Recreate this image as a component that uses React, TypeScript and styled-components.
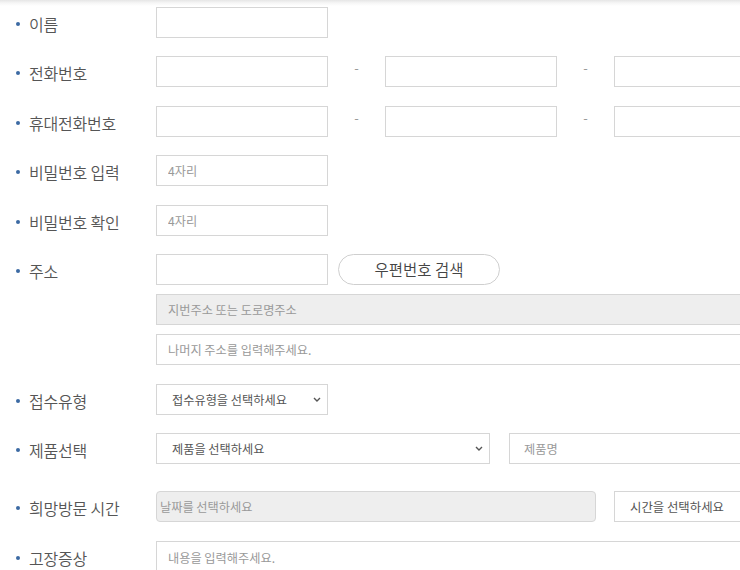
import React from "react";
import styled, { createGlobalStyle } from "styled-components";

const GlobalStyle = createGlobalStyle`
  html, body { margin: 0; padding: 0; background: #fff; overflow: hidden; }
  body { font-family: "Noto Sans CJK KR", "Noto Sans", sans-serif; }
  * { box-sizing: border-box; }
`;

const Page = styled.div`
  width: 740px;
  height: 570px;
  overflow: hidden;
  background: linear-gradient(#e6e6e6 0, #f6f6f6 3px, #fff 6px);
  padding: 7px 0 0 16px;
`;

const Form = styled.div`
  width: 820px;
  display: flex;
  flex-direction: column;
`;

const Row = styled.div<{ $gap?: number }>`
  display: flex;
  align-items: flex-start;
  margin-bottom: ${(p) => p.$gap ?? 18}px;
`;

const Label = styled.div`
  flex: none;
  width: 140px;
  height: 31px;
  display: flex;
  align-items: center;
  gap: 9px;
  padding-top: 2px;
  font-size: 16px;
  font-weight: 350;
  color: #555;
  letter-spacing: -0.2px;
  &::before {
    content: "";
    width: 4px;
    height: 4px;
    border-radius: 50%;
    background: #3b6aa3;
  }
`;

const Field = styled.div`
  width: 630px;
  display: flex;
  flex-direction: column;
  gap: 9px;
`;

const Line = styled.div`
  display: flex;
  align-items: flex-start;
`;

const TextInput = styled.input<{ $w?: number; $gray?: boolean; $round?: boolean; $pad?: number }>`
  flex: ${(p) => (p.$w ? "none" : "1 1 auto")};
  width: ${(p) => (p.$w ? `${p.$w}px` : "auto")};
  min-width: 0;
  height: 31px;
  border: 1px solid #d6d6d6;
  border-radius: ${(p) => (p.$round ? "4px" : "0")};
  background: ${(p) => (p.$gray ? "#eeeeee" : "#fff")};
  padding: 0 0 0 ${(p) => p.$pad ?? 11}px;
  font-family: "Noto Sans CJK KR", "Noto Sans", sans-serif;
  font-size: 12.2px;
  color: #555;
  outline: none;
  &::placeholder {
    color: #999;
  }
`;

const Dash = styled.span`
  flex: none;
  width: 57px;
  text-align: center;
  font-size: 13px;
  line-height: 24px;
  color: #999;
`;

const PillButton = styled.button`
  flex: none;
  margin-left: 10px;
  width: 162px;
  height: 31px;
  border: 1px solid #cfcfcf;
  border-radius: 16px;
  background: #fff;
  font-family: "Noto Sans CJK KR", "Noto Sans", sans-serif;
  font-size: 15.5px;
  font-weight: 350;
  color: #444;
  padding: 0 0 2px;
`;

const BoxButton = styled.button`
  flex: none;
  margin-left: 18px;
  width: 174px;
  height: 31px;
  border: 1px solid #d6d6d6;
  background: #fff;
  text-align: left;
  padding: 0 0 0 15px;
  font-family: "Noto Sans CJK KR", "Noto Sans", sans-serif;
  font-size: 12.4px;
  color: #555;
`;

const SelectWrap = styled.div<{ $w: number }>`
  position: relative;
  flex: none;
  width: ${(p) => p.$w}px;
  height: 31px;
`;

const Select = styled.select`
  appearance: none;
  -webkit-appearance: none;
  width: 100%;
  height: 31px;
  border: 1px solid #d6d6d6;
  border-radius: 0;
  background: #fff;
  padding: 0 0 0 15px;
  font-family: "Noto Sans CJK KR", "Noto Sans", sans-serif;
  font-size: 12.2px;
  color: #555;
  outline: none;
`;

const Chevron = styled.svg`
  position: absolute;
  right: 7px;
  top: 13px;
  pointer-events: none;
`;

const Gap = styled.div`
  flex: none;
  width: 19px;
`;

const Area = styled.textarea`
  width: 100%;
  height: 80px;
  border: 1px solid #d6d6d6;
  padding: 7px 11px;
  resize: none;
  font-family: "Noto Sans CJK KR", "Noto Sans", sans-serif;
  font-size: 12.2px;
  color: #555;
  outline: none;
  &::placeholder {
    color: #999;
  }
`;

const Arrow = () => (
  <Chevron width="8" height="5" viewBox="0 0 8 5">
    <path d="M1 1l3 3 3-3" fill="none" stroke="#555" strokeWidth="1.4" />
  </Chevron>
);

const DropDown: React.FC<{ w: number; text: string }> = ({ w, text }) => (
  <SelectWrap $w={w}>
    <Select defaultValue="">
      <option value="">{text}</option>
    </Select>
    <Arrow />
  </SelectWrap>
);

const PhoneInputs = () => (
  <Line>
    <TextInput $w={172} />
    <Dash>-</Dash>
    <TextInput $w={172} />
    <Dash>-</Dash>
    <TextInput $w={172} />
  </Line>
);

export default function App() {
  return (
    <>
      <GlobalStyle />
      <Page>
        <Form>
          <Row>
            <Label>이름</Label>
            <Field>
              <Line>
                <TextInput $w={172} />
              </Line>
            </Field>
          </Row>
          <Row $gap={19}>
            <Label>전화번호</Label>
            <Field>
              <PhoneInputs />
            </Field>
          </Row>
          <Row>
            <Label>휴대전화번호</Label>
            <Field>
              <PhoneInputs />
            </Field>
          </Row>
          <Row $gap={19}>
            <Label>비밀번호 입력</Label>
            <Field>
              <Line>
                <TextInput $w={172} placeholder="4자리" />
              </Line>
            </Field>
          </Row>
          <Row>
            <Label>비밀번호 확인</Label>
            <Field>
              <Line>
                <TextInput $w={172} placeholder="4자리" />
              </Line>
            </Field>
          </Row>
          <Row $gap={19}>
            <Label>주소</Label>
            <Field>
              <Line>
                <TextInput $w={172} />
                <PillButton>우편번호 검색</PillButton>
              </Line>
              <Line>
                <TextInput $gray placeholder="지번주소 또는 도로명주소" readOnly />
              </Line>
              <Line>
                <TextInput placeholder="나머지 주소를 입력해주세요." />
              </Line>
            </Field>
          </Row>
          <Row>
            <Label>접수유형</Label>
            <Field>
              <Line>
                <DropDown w={172} text="접수유형을 선택하세요" />
              </Line>
            </Field>
          </Row>
          <Row $gap={27}>
            <Label>제품선택</Label>
            <Field>
              <Line>
                <DropDown w={334} text="제품을 선택하세요" />
                <Gap />
                <TextInput placeholder="제품명" $pad={14} />
              </Line>
            </Field>
          </Row>
          <Row $gap={19}>
            <Label>희망방문 시간</Label>
            <Field>
              <Line>
                <TextInput $w={440} $gray $round $pad={3} placeholder="날짜를 선택하세요" readOnly />
                <BoxButton>시간을 선택하세요</BoxButton>
              </Line>
            </Field>
          </Row>
          <Row>
            <Label>고장증상</Label>
            <Field>
              <Area placeholder="내용을 입력해주세요." />
            </Field>
          </Row>
        </Form>
      </Page>
    </>
  );
}
